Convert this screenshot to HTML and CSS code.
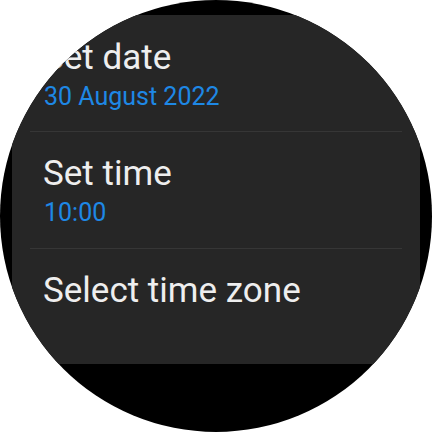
FILE: index.html
```html
<!DOCTYPE html>
<html lang="en">
<head>
<meta charset="utf-8">
<title>Date and time</title>
<link rel="stylesheet" href="styles.css">
</head>
<body>
<div class="watch">
  <div class="panel">
    <div class="row first">
      <div class="title">Set date</div>
      <div class="sub">30 August 2022</div>
    </div>
    <div class="divider"></div>
    <div class="row">
      <div class="title">Set time</div>
      <div class="sub">10:00</div>
    </div>
    <div class="divider"></div>
    <div class="row">
      <div class="title">Select time zone</div>
    </div>
  </div>
</div>
</body>
</html>
```
FILE: styles.css
```css
html, body {
  margin: 0;
  padding: 0;
  background: #ffffff;
}
body {
  width: 432px;
  height: 432px;
  overflow: hidden;
  font-family: Roboto, "Noto Sans", sans-serif;
}
.watch {
  width: 432px;
  height: 432px;
  border-radius: 50%;
  background: #000000;
  overflow: hidden;
  padding: 15px 12px 0 12px;
  box-sizing: border-box;
}
.panel {
  height: 349px;
  background: #262626;
  display: flex;
  flex-direction: column;
}
.row {
  height: 116px;
  box-sizing: border-box;
  padding: 22px 0 0 32px;
  flex: none;
}
.row.first {
  padding-top: 23px;
}
.divider {
  height: 1px;
  margin: 0 18px;
  background: #363636;
  flex: none;
}
.title {
  font-size: 35px;
  line-height: 40px;
  font-weight: 400;
  color: #eeeeee;
  white-space: nowrap;
  margin-left: -1px;
}
.sub {
  font-size: 25px;
  line-height: 30px;
  margin-top: 4px;
  font-weight: 400;
  color: #1e88e5;
  white-space: nowrap;
}
```
